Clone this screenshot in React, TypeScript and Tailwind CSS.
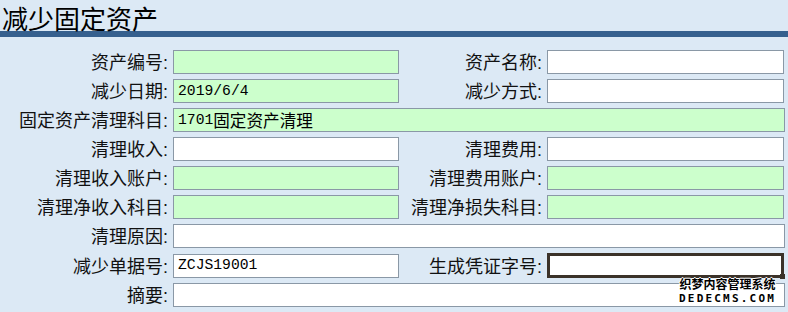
import React from 'react';

type Field = {
  label: string;
  value?: string;
  green?: boolean;
  focused?: boolean;
};

type Row = { left: Field; right?: Field };

const rows: Row[] = [
  { left: { label: '资产编号', green: true }, right: { label: '资产名称' } },
  { left: { label: '减少日期', value: '2019/6/4', green: true }, right: { label: '减少方式' } },
  { left: { label: '固定资产清理科目', value: '1701固定资产清理', green: true } },
  { left: { label: '清理收入' }, right: { label: '清理费用' } },
  { left: { label: '清理收入账户', green: true }, right: { label: '清理费用账户', green: true } },
  { left: { label: '清理净收入科目', green: true }, right: { label: '清理净损失科目', green: true } },
  { left: { label: '清理原因' } },
  { left: { label: '减少单据号', value: 'ZCJS19001' }, right: { label: '生成凭证字号', focused: true } },
  { left: { label: '摘要' } },
];

const cjk = "font-['Noto_Sans_CJK_SC','Noto_Sans',sans-serif]";

// split value into ascii runs (mono) and cjk runs
function Value({ text }: { text: string }) {
  const parts = text.match(/[\x00-\x7f]+|[^\x00-\x7f]+/g) ?? [];
  return (
    <>
      {parts.map((p, i) =>
        /^[\x00-\x7f]+$/.test(p) ? (
          <span key={i} className="font-['Liberation_Mono',monospace] text-[14.7px]">
            {p}
          </span>
        ) : (
          <span key={i} className={`${cjk} text-[16.6px]`}>
            {p}
          </span>
        ),
      )}
    </>
  );
}

function Box({ field, width }: { field: Field; width: string }) {
  if (field.focused) {
    return (
      <div className={`relative h-[25px] ${width} border-[3px] border-[#3b3229] bg-white`}>
        <div className="absolute -right-[4px] -bottom-[4px] h-[5px] w-[5px] bg-[#3b3229]" />
      </div>
    );
  }
  return (
    <div
      className={`flex h-[24px] ${width} items-center border border-[#8a98a6] pl-[4px] leading-none text-black ${
        field.green ? 'bg-[#ccffcc]' : 'bg-white'
      }`}
    >
      {field.value && <Value text={field.value} />}
    </div>
  );
}

function Label({ text, width }: { text: string; width: string }) {
  return (
    <div className={`${width} shrink-0 whitespace-nowrap text-right text-[18px] leading-none text-[#111]`}>
      <span className={cjk}>{text}</span>
      <span className="font-['Liberation_Sans',sans-serif]">:</span>
    </div>
  );
}

export default function App() {
  return (
    <div className="relative h-[312px] w-[788px] overflow-hidden bg-[#dce9f5]">
      <div className="h-[31px] pl-[2px] pt-[4px]">
        <h1 className={`text-[26px] leading-[27px] font-normal text-black ${cjk}`}>减少固定资产</h1>
      </div>
      <div className="h-[6px] bg-[#36608e]" />

      <div className="flex flex-col gap-[5px] pt-[13px]">
        {rows.map((row, i) => (
          <div key={i} className="flex items-center">
            <Label text={row.left.label} width="w-[168px]" />
            <div className="ml-[5px]">
              <Box field={row.left} width={row.right ? 'w-[226px]' : 'w-[612px]'} />
            </div>
            {row.right && (
              <>
                <Label text={row.right.label} width="w-[143px]" />
                <div className="ml-[5px]">
                  <Box field={row.right} width="w-[237px]" />
                </div>
              </>
            )}
          </div>
        ))}
      </div>

      {/* watermark */}
      <div className="pointer-events-none absolute left-[679px] top-[278px] flex flex-col items-center leading-none text-black [text-shadow:1px_0_0_#fff,-1px_0_0_#fff,0_1px_0_#fff,0_-1px_0_#fff]">
        <span className={`${cjk} text-[12px] font-bold`}>织梦内容管理系统</span>
        <span className="mt-[3px] font-['DejaVu_Sans_Mono',monospace] text-[11px] font-bold tracking-[2.2px]">
          DEDECMS.COM
        </span>
      </div>
    </div>
  );
}
